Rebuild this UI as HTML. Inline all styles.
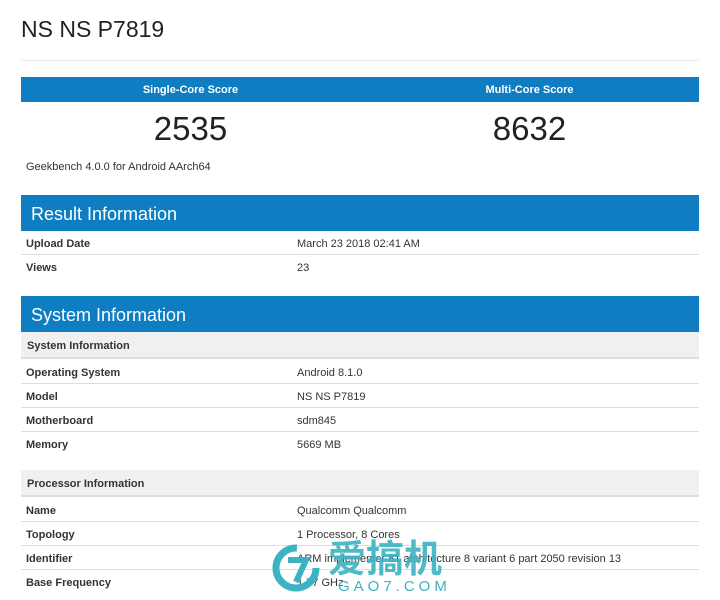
<!DOCTYPE html>
<html><head><meta charset="utf-8"><style>
*{margin:0;padding:0;box-sizing:border-box}
body{width:720px;height:600px;overflow:hidden;background:#fff;font-family:"Liberation Sans",Arial,sans-serif;color:#333;position:relative}
.abs{position:absolute}
h1{position:absolute;left:21px;top:16px;font-size:23px;font-weight:normal;color:#222}
.hr{left:21px;width:678px;top:60px;height:1px;background:#e6e6e6}
.bar{left:21px;width:678px;top:77px;height:25px;background:#0e7dc2;color:#fff;font-weight:bold;font-size:11px}
.bar span{position:absolute;top:7px;width:339px;text-align:center}
.num{top:110px;font-size:33px;color:#222;width:339px;text-align:center}
.gb{left:26px;top:161px;font-size:11px;color:#333}
.hd{left:21px;width:678px;height:36px;background:#0e7dc2;color:#fff;font-size:18px;padding:9px 0 0 10px}
.row{left:21px;width:678px;height:24px;border-bottom:1px solid #ddd;font-size:11px}
.row b{position:absolute;left:5px;top:7px}
.row i{position:absolute;left:276px;top:7px;font-style:normal}
.sub{left:21px;width:678px;height:27px;background:#f0f0f0;font-size:11px;font-weight:bold;padding:8px 0 0 6px;border-bottom:2px solid #ddd}
</style></head><body>
<h1>NS NS P7819</h1>
<div class="abs hr"></div>
<div class="abs bar"><span style="left:0">Single-Core Score</span><span style="left:339px">Multi-Core Score</span></div>
<div class="abs num" style="left:21px">2535</div>
<div class="abs num" style="left:360px">8632</div>
<div class="abs gb">Geekbench 4.0.0 for Android AArch64</div>

<div class="abs hd" style="top:195px">Result Information</div>
<div class="abs row" style="top:231px"><b>Upload Date</b><i>March 23 2018 02:41 AM</i></div>
<div class="abs row" style="top:255px;border:none"><b>Views</b><i>23</i></div>

<div class="abs hd" style="top:296px">System Information</div>
<div class="abs sub" style="top:332px">System Information</div>
<div class="abs row" style="top:360px"><b>Operating System</b><i>Android 8.1.0</i></div>
<div class="abs row" style="top:384px"><b>Model</b><i>NS NS P7819</i></div>
<div class="abs row" style="top:408px"><b>Motherboard</b><i>sdm845</i></div>
<div class="abs row" style="top:432px;border:none"><b>Memory</b><i>5669 MB</i></div>
<div class="abs sub" style="top:470px">Processor Information</div>
<div class="abs row" style="top:498px"><b>Name</b><i>Qualcomm Qualcomm</i></div>
<div class="abs row" style="top:522px"><b>Topology</b><i>1 Processor, 8 Cores</i></div>
<div class="abs row" style="top:546px"><b>Identifier</b><i>ARM implementer 81 architecture 8 variant 6 part 2050 revision 13</i></div>
<div class="abs row" style="top:570px;border:none"><b>Base Frequency</b><i>1.77 GHz</i></div>

<svg class="abs" style="left:270px;top:540px" width="60" height="55" viewBox="0 0 60 55"><circle cx="26" cy="28" r="20" fill="none" stroke="#3bb3c3" stroke-width="7" stroke-dasharray="95 40"/><path d="M18 20h18l-10 22" fill="none" stroke="#3bb3c3" stroke-width="6"/></svg>
<div class="abs" style="left:328px;top:536px;font-size:38px;font-weight:bold;color:#3bb3c3;font-family:'Noto Sans CJK SC',sans-serif;line-height:40px;opacity:.9">爱搞机</div>
<div class="abs" style="left:338px;top:578px;font-size:15px;color:#3bb3c3;letter-spacing:4px;line-height:18px">GAO7.COM</div>
</body></html>
